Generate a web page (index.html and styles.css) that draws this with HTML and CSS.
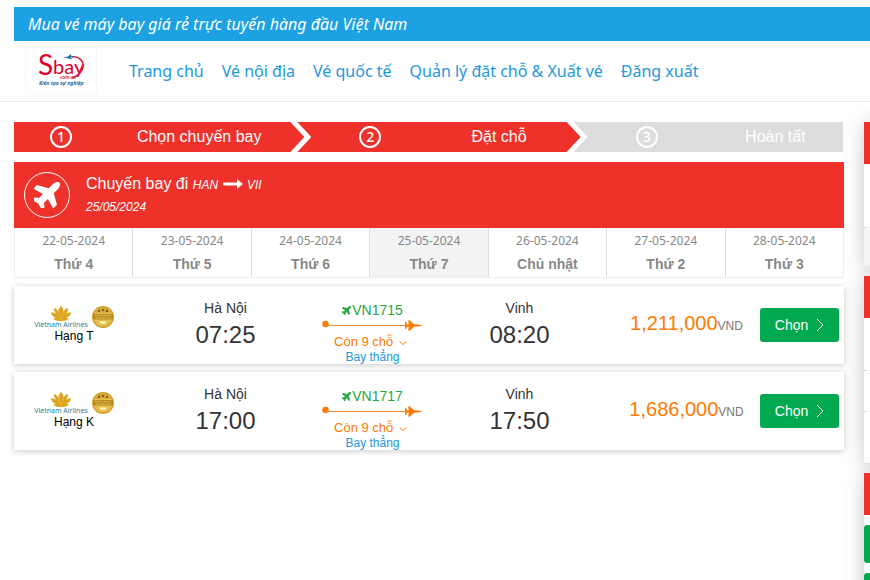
FILE: index.html
```
<!DOCTYPE html>
<html lang="vi">
<head>
    <meta charset="UTF-8">
    <meta name="viewport" content="width=device-width, initial-scale=1.0">
    <title>Sbay - Chọn chuyến bay</title>
    <link rel="stylesheet" href="styles.css">
</head>
<body>
    <!-- shared icons -->
    <svg class="sprite" aria-hidden="true">
        <symbol id="plane" viewBox="28 43 474 474">
            <path transform="rotate(-45 288 256)" d="M480 192H365.710L260.610 8.060A16 16 0 0 0 246.710 0h-65.500c-10.630 0-18.300 10.170-15.380 20.390L214.860 192H112l-43.200-57.600c-3-4-7.800-6.400-12.800-6.400H16C5.600 128-2 137.800.5 147.900L32 256 .5 364.100C-2 374.200 5.600 384 16 384H56c5 0 9.800-2.400 12.800-6.400L112 320h102.860l-49 171.600c-2.900 10.200 4.700 20.400 15.400 20.400h65.500c5.700 0 11-3 13.900-8L365.710 320H480c35.350 0 96-28.650 96-64s-60.650-64-96-64z"/>
        </symbol>
        <symbol id="lotus" viewBox="0 0 22 16">
            <path d="M11 0c2 2 3 4 2.500 7C14.500 4 16 2.500 18.500 2c0 2.500-.7 4.500-2.200 6.500C18 7 20 6.500 22 7c-1 3-3 5-6 5.800 1.500 0 2.500.2 3.500 1C17 15.500 13 16 11 16s-6-.5-8.500-2.200c1-.8 2-1 3.500-1C3 12 1 10 0 7c2-.5 4 0 5.700 1.500C4.200 6.500 3.500 4.500 3.500 2 6 2.500 7.500 4 8.500 7 8 4 9 2 11 0z" fill="#dda41b"/>
            <path d="M11 14.500C9 11 8.500 9 8.500 7M11 14.500C13 11 13.500 9 13.500 7" fill="none" stroke="#f0cf80" stroke-width=".5"/>
        </symbol>
        <symbol id="badge" viewBox="0 0 22 22">
            <circle cx="11" cy="11" r="11" fill="#cfa02a"/>
            <circle cx="11" cy="11" r="9.500" fill="#e6c04c"/>
            <path d="M3 6.500 7 2h8l4 4.500z" fill="#d3a535"/>
            <path d="M1 8h20v5.500H1z" fill="#bb8d20"/>
            <path d="M3 9.500h16M4 12h14" stroke="#e3c05e" stroke-width="1" stroke-dasharray="2 1"/>
            <path d="M6 5h2M10 4h2M14 5h2" stroke="#5e4714" stroke-width="1.500"/>
            <path d="M8 16.500h6" stroke="#fff6d5" stroke-width="2"/>
        </symbol>
        <symbol id="route" viewBox="0 0 101 12">
            <circle cx="3.500" cy="5" r="3.200" fill="#ff7a00"/>
            <path d="M4 6.500h82" stroke="#f58a3c"/>
            <path d="M100 6.500c-1 .8-4 1-8 1.200L88 11.500h-2l1-3.700h-2L84 10h-1V3h1l1 2.200h2L86 1.500h2l4 3.800c4 .2 7 .4 8 1.200z" fill="#ff7a00"/>
        </symbol>
    </svg>

    <div class="topbar">Mua vé máy bay giá rẻ trực tuyến hàng đầu Việt Nam</div>

    <header class="header">
        <a href="#" class="logo" aria-label="Sbay">
            <svg width="70" height="46" viewBox="0 0 70 46">
                <text x="12" y="27" class="logo-s">S</text>
                <text x="27" y="26" class="logo-bay">bay</text>
                <path d="M46 9c7-1 12 4 11 10-1 5-5 9-11 11" fill="none" stroke="#e4173e" stroke-width="1.500"/>
                <path d="M37 9.500l5-1 2-2 1.500.3-.5 1.500 5-.3-5 1.500 1 2-5-1.500z" fill="#1b75a8"/>
                <text x="34" y="31" class="logo-domain">com.vn</text>
                <text x="13" y="37" class="logo-slogan">Kiến tạo sự nghiệp</text>
            </svg>
        </a>
        <nav class="nav">
            <a href="#">Trang chủ</a>
            <a href="#">Vé nội địa</a>
            <a href="#">Vé quốc tế</a>
            <a href="#">Quản lý đặt chỗ &amp; Xuất vé</a>
            <a href="#">Đăng xuất</a>
        </nav>
    </header>

    <div class="page">
        <main class="main">
            <ol class="steps">
                <li class="step active"><span class="num"><b>1</b></span><span class="step-title">Chọn chuyến bay</span></li>
                <li class="step active"><span class="num"><b>2</b></span><span class="step-title">Đặt chỗ</span></li>
                <li class="step"><span class="num"><b>3</b></span><span class="step-title">Hoàn tất</span></li>
            </ol>

            <div class="route-head">
                <span class="route-icon"><svg width="26" height="26"><use href="#plane"/></svg></span>
                <div>
                    <div class="route-title">Chuyến bay đi <i>HAN</i>
                        <svg width="20" height="10" viewBox="0 0 20 10"><path d="M0 3.500h14V0l6 5-6 5V6.500H0z" fill="#fff"/></svg>
                        <i>VII</i>
                    </div>
                    <div class="route-date">25/05/2024</div>
                </div>
            </div>

            <div class="days">
                <a href="#" class="day"><span>22-05-2024</span><b>Thứ 4</b></a>
                <a href="#" class="day"><span>23-05-2024</span><b>Thứ 5</b></a>
                <a href="#" class="day"><span>24-05-2024</span><b>Thứ 6</b></a>
                <a href="#" class="day selected"><span>25-05-2024</span><b>Thứ 7</b></a>
                <a href="#" class="day"><span>26-05-2024</span><b>Chủ nhật</b></a>
                <a href="#" class="day"><span>27-05-2024</span><b>Thứ 2</b></a>
                <a href="#" class="day"><span>28-05-2024</span><b>Thứ 3</b></a>
            </div>

            <div class="flight">
                <div class="airline">
                    <div class="airline-logos">
                        <div class="brand">
                            <svg width="22" height="15"><use href="#lotus"/></svg>
                            <span>Vietnam Airlines</span>
                        </div>
                        <svg width="22" height="22"><use href="#badge"/></svg>
                    </div>
                    <div class="cabin">Hạng T</div>
                </div>
                <div class="stop">
                    <div class="city">Hà Nội</div>
                    <div class="time">07:25</div>
                </div>
                <div class="info">
                    <div class="code"><svg width="9" height="9"><use href="#plane"/></svg>VN1715</div>
                    <svg class="line" width="101" height="12"><use href="#route"/></svg>
                    <a href="#" class="seats">Còn 9 chỗ <svg width="8" height="6" viewBox="0 0 8 6"><path d="M.5 1.500 4 4.500l3.500-3" fill="none" stroke="#ff7a00"/></svg></a>
                    <a href="#" class="direct">Bay thẳng</a>
                </div>
                <div class="stop">
                    <div class="city">Vinh</div>
                    <div class="time">08:20</div>
                </div>
                <div class="price">1,211,000<small>VND</small></div>
                <button type="button" class="choose">Chọn <svg width="8" height="14" viewBox="0 0 8 14"><path d="M1 1l6 6-6 6" fill="none" stroke="#fff"/></svg></button>
            </div>

            <div class="flight">
                <div class="airline">
                    <div class="airline-logos">
                        <div class="brand">
                            <svg width="22" height="15"><use href="#lotus"/></svg>
                            <span>Vietnam Airlines</span>
                        </div>
                        <svg width="22" height="22"><use href="#badge"/></svg>
                    </div>
                    <div class="cabin">Hạng K</div>
                </div>
                <div class="stop">
                    <div class="city">Hà Nội</div>
                    <div class="time">17:00</div>
                </div>
                <div class="info">
                    <div class="code"><svg width="9" height="9"><use href="#plane"/></svg>VN1717</div>
                    <svg class="line" width="101" height="12"><use href="#route"/></svg>
                    <a href="#" class="seats">Còn 9 chỗ <svg width="8" height="6" viewBox="0 0 8 6"><path d="M.5 1.500 4 4.500l3.500-3" fill="none" stroke="#ff7a00"/></svg></a>
                    <a href="#" class="direct">Bay thẳng</a>
                </div>
                <div class="stop">
                    <div class="city">Vinh</div>
                    <div class="time">17:50</div>
                </div>
                <div class="price">1,686,000<small>VND</small></div>
                <button type="button" class="choose">Chọn <svg width="8" height="14" viewBox="0 0 8 14"><path d="M1 1l6 6-6 6" fill="none" stroke="#fff"/></svg></button>
            </div>
        </main>

        <aside class="sidebar">
            <div class="box">
                <div class="box-head"></div>
                <div class="box-row tall"></div>
                <div class="box-row total"></div>
            </div>
            <div class="box">
                <div class="box-head"></div>
                <div class="box-row"></div>
                <div class="box-row short"></div>
                <div class="box-row"></div>
            </div>
            <div class="box">
                <div class="box-head"></div>
                <div class="box-buttons">
                    <button type="button" aria-label="Tìm chuyến bay"></button>
                    <button type="button" aria-label="Đặt lại"></button>
                </div>
            </div>
        </aside>
    </div>
</body>
</html>
```
FILE: styles.css
```
* {
    box-sizing: border-box;
}
html {
    overflow: hidden;
}
body {
    margin: 0;
    padding-top: 7px;
    font-family: "Liberation Sans", Arial, sans-serif;
    font-size: 14px;
    color: #333;
    background: #fff;
}
a {
    text-decoration: none;
    color: inherit;
}
.sprite {
    display: none;
}

/* header */
.topbar {
    margin-left: 14px;
    padding: 0 14px;
    background: #1ca1e2;
    color: #fff;
    font: italic 16px/34px "Noto Sans", sans-serif;
}
.header {
    display: flex;
    align-items: center;
    gap: 32px;
    padding: 6px 25px;
    border-bottom: 1px solid #e7e7e7;
}
.logo {
    display: flex;
    border: 1px solid #f7f7f7;
}
.logo-s {
    font: 28px Lato, sans-serif;
    fill: #e4002b;
}
.logo-bay {
    font: 20px Lato, sans-serif;
    fill: #e4002b;
}
.logo-domain {
    font: bold 5px Lato, sans-serif;
    fill: #e4173e;
}
.logo-slogan {
    font: italic bold 5px "Noto Sans", sans-serif;
    fill: #0c6aa6;
}
.nav {
    display: flex;
    gap: 18px;
    font: 16px/24px "Noto Sans", sans-serif;
    color: #2298dc;
}

.page {
    display: flex;
    gap: 20px;
    padding: 20px 0 0 14px;
}
.main {
    flex: 1;
    min-width: 0;
}

/* steps */
.steps {
    display: grid;
    grid-template-columns: repeat(3, 1fr);
    margin: 0 1px 10px 0;
    padding: 0;
    list-style: none;
    color: #fff;
}
.step {
    position: relative;
    display: flex;
    align-items: center;
    height: 30px;
    padding-left: 33px;
    background: #ddd;
}
.step:first-child {
    padding-left: 0;
}
.step.active {
    background: #ee322b;
}
.step.active::before,
.step.active::after {
    content: "";
    position: absolute;
    z-index: 1;
    top: 0;
    left: calc(100% - 1px);
    width: 22px;
    height: 30px;
    background: #fff;
    clip-path: polygon(1px 0, 8px 0, 100% 50%, 8px 100%, 1px 100%);
}
.step.active::after {
    width: 15px;
    background: #ee322b;
    clip-path: polygon(0 0, 1px 0, 100% 50%, 1px 100%, 0 100%);
}
.num {
    display: flex;
    justify-content: center;
    width: 94px;
}
.num b {
    width: 22px;
    height: 22px;
    border: 2px solid #fff;
    border-radius: 50%;
    font: 500 14px/18px "Noto Sans", sans-serif;
    text-align: center;
}
.step-title {
    flex: 1;
    font-size: 16px;
    text-align: center;
}
.step + .step .step-title {
    padding-left: 14px;
}

.route-head {
    display: flex;
    align-items: center;
    gap: 16px;
    padding: 10px;
    background: #ee322b;
    color: #fff;
}
.route-icon {
    display: flex;
    align-items: center;
    justify-content: center;
    width: 46px;
    height: 46px;
    border: 1px solid #fff;
    border-radius: 50%;
    fill: #fff;
}
.route-title {
    font-size: 16px;
    line-height: 22px;
}
.route-title i {
    font-size: 12px;
}
.route-date {
    font-size: 12px;
    font-style: italic;
    line-height: 22px;
}

/* day picker */
.days {
    display: flex;
    margin-bottom: 8px;
    border: 1px solid #eee;
    border-top: 0;
}
.day {
    flex: 1;
    display: flex;
    flex-direction: column;
    height: 49px;
    border-left: 1px solid #ddd;
    color: #888;
    text-align: center;
    line-height: 22px;
}
.day:first-child {
    border-left: 0;
}
.day span {
    font: 12px/25px "Noto Sans", sans-serif;
}
.day.selected {
    background: #f3f3f3;
}

/* flights */
.flight {
    display: grid;
    grid-template-columns: 138fr 147fr 147fr 147fr 167fr 79px;
    align-items: center;
    min-height: 78px;
    margin-bottom: 8px;
    padding-right: 5px;
    background: #fff;
    box-shadow: 0 1px 6px rgba(0, 0, 0, .22);
    text-align: center;
}
.airline {
    padding: 0 18px 2px 0;
}
.airline-logos {
    display: flex;
    justify-content: center;
    gap: 4px;
}
.brand {
    display: flex;
    flex-direction: column;
    align-items: center;
    color: #1d8299;
    font: 7px/8px "Noto Sans", sans-serif;
    white-space: nowrap;
}
.cabin {
    color: #000;
    font-size: 12px;
    line-height: 14px;
}
.stop {
    padding-bottom: 2px;
}
.city {
    line-height: 22px;
}
.time {
    font-size: 24px;
    line-height: 32px;
}
.info {
    display: flex;
    flex-direction: column;
    align-items: center;
    align-self: end;
    font-size: 12px;
    line-height: 13px;
}
.code {
    color: #28a745;
    fill: #28a745;
    font-size: 14px;
    line-height: 17px;
}
.code svg {
    margin-right: 1px;
}
.line {
    margin-bottom: 2px;
}
.seats {
    color: #ff7a00;
    font-size: 13px;
    line-height: 18px;
}
.seats svg {
    margin: 0 4px 0 2px;
}
.direct {
    color: #2298dc;
}
.price {
    padding: 0 0 4px 20px;
    color: #ff7a00;
    font-size: 20px;
}
.price small {
    color: #777;
    font-size: 12px;
}
.choose {
    display: flex;
    align-items: center;
    justify-content: center;
    gap: 8px;
    height: 34px;
    padding: 0;
    border: 0;
    border-radius: 3px;
    background: #00a84f;
    color: #fff;
    font: 14px "Liberation Sans", Arial, sans-serif;
}

.sidebar {
    flex: 0 0 260px;
    margin-right: -254px;
}
.box {
    margin-bottom: 10px;
    background: #fff;
    box-shadow: 0 2px 20px rgba(0, 0, 0, .22);
}
.box-head {
    height: 42px;
    background: #ee322b;
}
.box-row {
    height: 52px;
}
.box-row + .box-row {
    border-top: 1px dashed #ddd;
}
.box-row.tall {
    height: 63px;
}
.box-row.short {
    height: 41px;
}
.box-row.total {
    height: 39px;
    background: #f5f5f5;
}
.box-buttons {
    display: flex;
    flex-direction: column;
    gap: 10px;
    padding: 10px 0;
}
.box-buttons button {
    height: 38px;
    border: 0;
    border-radius: 3px;
    background: #00a84f;
}
```
